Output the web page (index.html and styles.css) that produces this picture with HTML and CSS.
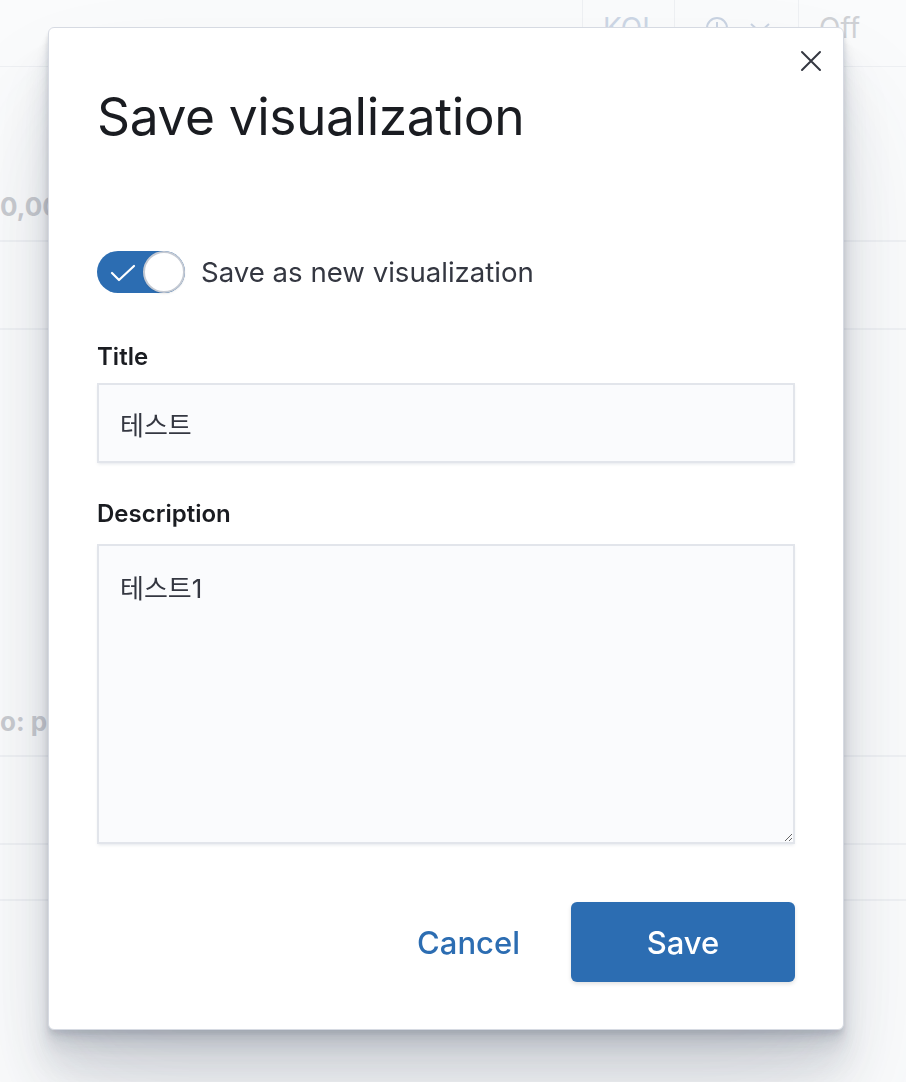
FILE: index.html
```html
<!DOCTYPE html>
<html lang="en">
<head>
    <meta charset="UTF-8">
    <link rel="stylesheet" href="styles.css">
</head>
<body>
    <div class="page">
        <div class="topbar">
            <div class="tb-item kql">KQL</div>
            <div class="tb-item date">
                <svg width="24" height="24" viewBox="0 0 24 24" fill="none" stroke="#c9d3e2" stroke-width="2">
                    <circle cx="12" cy="12" r="10"/>
                    <path d="M12 6v6"/>
                </svg>
                <svg width="22" height="14" viewBox="0 0 22 14" fill="none" stroke="#c9d3e2" stroke-width="2">
                    <path d="M2 3l9 8 9-8"/>
                </svg>
            </div>
            <div class="tb-item refresh">Off</div>
        </div>
        <div class="block block-top"><span class="faded-num">0,000</span></div>
        <div class="row row-tall"></div>
        <div class="row row-short"></div>
        <div class="block block-mid"><span class="faded-num">o: pr</span></div>
        <div class="row row-tall"></div>
        <div class="row row-short"></div>
        <div class="row"></div>
    </div>

    <div class="overlay">
        <div class="modal">
            <button class="close-btn" aria-label="Close">
                <svg width="22" height="22" viewBox="0 0 22 22" fill="none" stroke="#343741" stroke-width="2" stroke-linecap="round">
                    <path d="M2 2l18 18M20 2L2 20"/>
                </svg>
            </button>

            <h1 class="modal-title">Save visualization</h1>

            <div class="switch-row">
                <div class="switch">
                    <svg class="switch-check" width="26" height="20" viewBox="0 0 26 20" fill="none" stroke="white" stroke-width="2.2" stroke-linecap="round" stroke-linejoin="round">
                        <path d="M2 10l7 7L24 3"/>
                    </svg>
                    <div class="switch-knob"></div>
                </div>
                <span class="switch-label">Save as new visualization</span>
            </div>

            <div class="field">
                <label class="field-label">Title</label>
                <input class="field-input" type="text" value="테스트">
            </div>

            <div class="field">
                <label class="field-label">Description</label>
                <textarea class="field-textarea">테스트1</textarea>
            </div>

            <div class="modal-footer">
                <button class="cancel-btn">Cancel</button>
                <button class="save-btn">Save</button>
            </div>
        </div>
    </div>
</body>
</html>
```

FILE: styles.css
```css
* {
    margin: 0;
    padding: 0;
    box-sizing: border-box;
}

body {
    font-family: Inter, 'Noto Sans CJK KR', sans-serif;
    background: #fafbfc;
    width: 906px;
    height: 1082px;
    overflow: hidden;
}

/* faded page behind the modal */
.page {
    height: 100%;
}

.topbar {
    display: flex;
    justify-content: flex-end;
    height: 67px;
    border-bottom: 1px solid #eef0f3;
}

.tb-item {
    display: flex;
    align-items: center;
    gap: 20px;
    height: 56px;
    padding: 0 20px;
    border-left: 1px solid #eef0f3;
    font-size: 28px;
    color: #ccd6e5;
}

.kql {
    width: 92px;
}

.date {
    width: 124px;
    padding-left: 30px;
}

.refresh {
    width: 108px;
    color: #cfd1d5;
}

.block {
    display: flex;
    align-items: flex-end;
}

.block-top {
    height: 173px;
    padding-bottom: 18px;
}

.block-mid {
    height: 371px;
    padding-bottom: 18px;
}

.faded-num {
    font-size: 26px;
    font-weight: 700;
    color: #c9cbd0;
}

.row {
    height: 88px;
    border-top: 2px solid #eff1f4;
}

.row-short {
    height: 56px;
}

/* modal */
.overlay {
    position: fixed;
    inset: 0;
    padding: 27px 0 0 48px;
}

.modal {
    position: relative;
    width: 796px;
    height: 1003px;
    padding: 57px 48px 0;
    background: white;
    border: 1px solid #d6dae2;
    border-radius: 6px;
    box-shadow:
        0 80px 128px rgba(65, 78, 101, 0.1),
        0 48px 64px rgba(65, 78, 101, 0.1),
        0 32px 32px rgba(65, 78, 101, 0.1),
        0 16px 16px rgba(65, 78, 101, 0.1),
        0 8px 8px rgba(65, 78, 101, 0.1),
        0 4px 4px rgba(65, 78, 101, 0.1);
}

.close-btn {
    position: absolute;
    top: 22px;
    right: 21px;
    display: flex;
    padding: 0;
    border: none;
    background: none;
}

.modal-title {
    font-size: 51.5px;
    font-weight: 400;
    line-height: 62px;
    color: #1a1c21;
    letter-spacing: -0.4px;
}

.switch-row {
    display: flex;
    align-items: center;
    gap: 16px;
    margin-top: 104px;
}

.switch {
    position: relative;
    display: flex;
    align-items: center;
    justify-content: flex-end;
    width: 88px;
    height: 42px;
    border-radius: 21px;
    background: #2c6db2;
}

.switch-check {
    position: absolute;
    left: 13px;
    top: 12px;
}

.switch-knob {
    width: 42px;
    height: 42px;
    border-radius: 50%;
    background: white;
    border: 2px solid #c5cad3;
    box-shadow: 0 1px 2px rgba(0, 0, 0, 0.08);
}

.switch-label {
    font-size: 27.6px;
    color: #343741;
}

.field {
    display: flex;
    flex-direction: column;
}

.field-label {
    margin-top: 48px;
    margin-bottom: 10px;
    font-size: 24px;
    font-weight: 600;
    line-height: 32px;
    color: #1a1c21;
}

.field + .field .field-label {
    margin-top: 35px;
    margin-bottom: 14px;
}

.field-input,
.field-textarea {
    width: 100%;
    padding: 0 21px;
    font-family: Inter, 'Noto Sans CJK KR', sans-serif;
    font-size: 26px;
    color: #343741;
    background: #fafbfd;
    border: 2px solid #e2e5eb;
    border-radius: 0;
    outline: none;
    box-shadow: 0 2px 3px -1px rgba(152, 162, 179, 0.25);
}

.field-input {
    height: 80px;
}

.field-textarea {
    height: 300px;
    padding-top: 23px;
    line-height: 40px;
    resize: vertical;
}

.modal-footer {
    display: flex;
    justify-content: flex-end;
    align-items: center;
    gap: 51px;
    margin-top: 58px;
}

.cancel-btn {
    font-family: Inter, sans-serif;
    font-size: 31px;
    font-weight: 500;
    color: #2c6db2;
    background: none;
    border: none;
}

.save-btn {
    width: 224px;
    height: 80px;
    font-family: Inter, sans-serif;
    font-size: 31px;
    font-weight: 500;
    color: white;
    background: #2c6db2;
    border: none;
    border-radius: 6px;
    box-shadow: 0 2px 4px rgba(0, 0, 0, 0.12);
}
```
